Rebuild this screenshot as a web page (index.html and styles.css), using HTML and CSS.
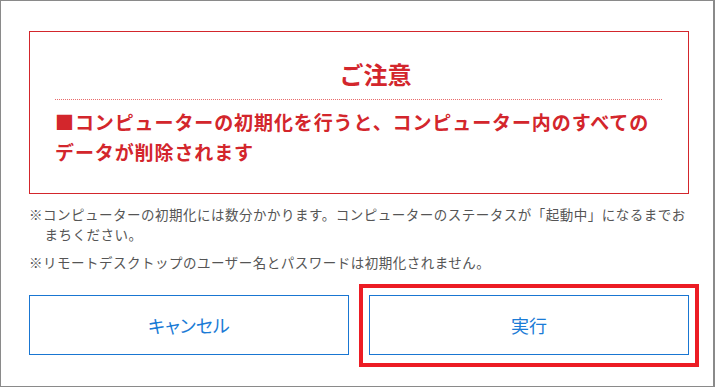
FILE: index.html
```html
<!DOCTYPE html>
<html lang="ja">
<head>
  <meta charset="UTF-8">
  <title>初期化の確認</title>
  <link rel="stylesheet" href="styles.css">
</head>
<body>
  <div class="dialog">
    <div class="caution">
      <h2 class="caution-title">ご注意</h2>
      <p class="caution-text">■コンピューターの初期化を行うと、コンピューター内のすべての<br>データが削除されます</p>
    </div>

    <p class="note">※コンピューターの初期化には数分かかります。コンピューターのステータスが「起動中」になるまでお<br>まちください。</p>
    <p class="note">※リモートデスクトップのユーザー名とパスワードは初期化されません。</p>

    <div class="buttons">
      <button class="btn">キャンセル</button>
      <div class="highlight-wrap">
        <button class="btn">実行</button>
        <span class="highlight"></span>
      </div>
    </div>
  </div>
</body>
</html>
```

FILE: styles.css
```css
body {
  margin: 0;
  font-family: "Noto Sans CJK JP", "Noto Sans", sans-serif;
  background: #fff;
}

.dialog {
  box-sizing: border-box;
  width: 715px;
  height: 387px;
  border: 1px solid #8a8a8a;
  border-right-width: 2px;
  padding: 30px 24px 0 28px;
}

.caution {
  box-sizing: border-box;
  width: 660px;
  border: 1px solid #d3262c;
  padding: 26px 10px 26px 25px;
}

.caution-title {
  margin: 0 16px 0 0;
  padding: 0 0 10px 34px;
  font-size: 24px;
  line-height: 31px;
  font-weight: bold;
  color: #d3262c;
  text-align: center;
  border-bottom: 1px dotted #e96a6a;
}

.caution-text {
  margin: 7px 0 0;
  font-size: 19px;
  line-height: 30px;
  letter-spacing: 0.9px;
  font-weight: bold;
  color: #d3262c;
  white-space: nowrap;
}

.note {
  margin: 10px 0 0;
  padding-left: 1.15em;
  text-indent: -1.15em;
  font-size: 13.5px;
  line-height: 20px;
  letter-spacing: 0.5px;
  color: #555;
  white-space: nowrap;
}

.note + .note {
  margin-top: 8px;
}

.buttons {
  display: flex;
  gap: 20px;
  width: 660px;
  margin-top: 23px;
}

.btn {
  box-sizing: border-box;
  width: 320px;
  height: 60px;
  background: #fff;
  border: 1px solid #1976d2;
  color: #1a7bd6;
  font-family: inherit;
  font-size: 18px;
  font-feature-settings: "palt";
  cursor: pointer;
}

.highlight-wrap {
  position: relative;
  display: flex;
}

.highlight {
  position: absolute;
  top: -11px;
  left: -10px;
  right: -10px;
  bottom: -12px;
  border: 4px solid #ec1c24;
  pointer-events: none;
}
```
